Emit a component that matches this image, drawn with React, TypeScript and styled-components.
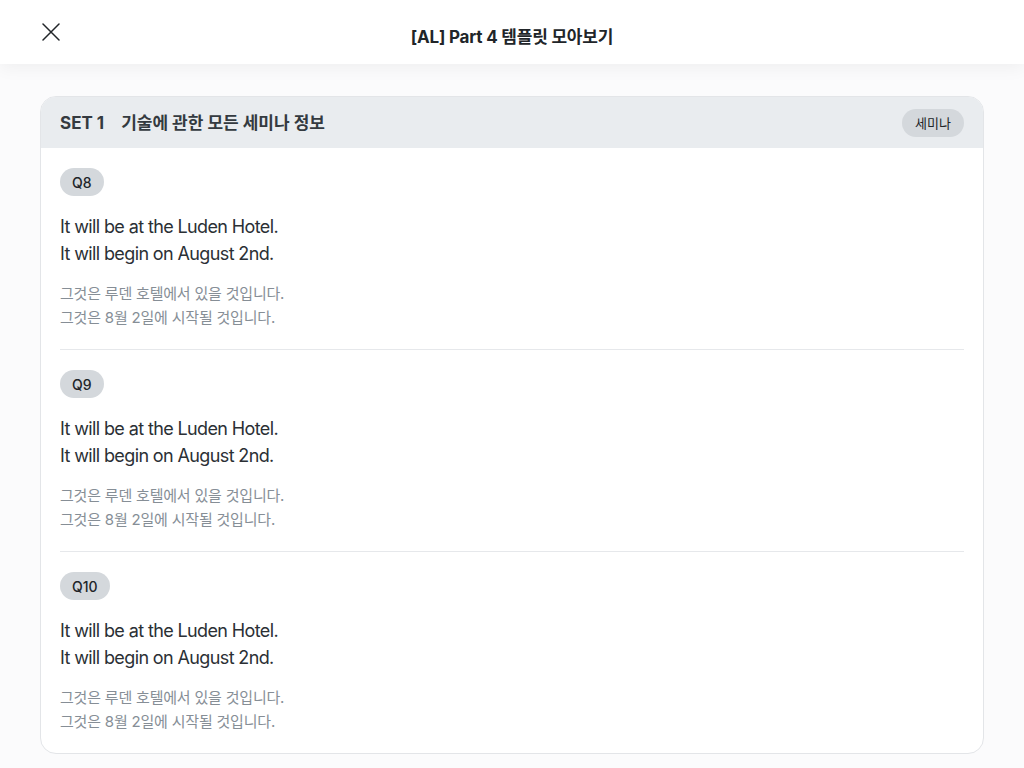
import React from 'react';
import styled, { createGlobalStyle } from 'styled-components';

const GlobalStyle = createGlobalStyle`
  html, body {
    margin: 0;
    padding: 0;
    background: #fbfbfc;
    font-family: 'Inter', 'Noto Sans CJK KR', sans-serif;
    color: #212529;
  }
  * { box-sizing: border-box; }
`;

const Page = styled.div`
  min-height: 768px;
`;

const Header = styled.header`
  position: relative;
  height: 64px;
  background: #fff;
  display: flex;
  align-items: center;
  justify-content: center;
  box-shadow: 0 4px 16px rgba(0, 0, 0, 0.05);
`;

const CloseButton = styled.button`
  position: absolute;
  left: 40px;
  top: 21px;
  width: 22px;
  height: 22px;
  padding: 0;
  border: 0;
  background: none;
  display: flex;
  align-items: center;
  justify-content: center;
`;

const Title = styled.h1`
  margin: 6px 0 0;
  font-size: 17px;
  font-weight: 700;
  letter-spacing: -0.2px;
  color: #212529;
`;

const Main = styled.main`
  padding: 32px 40px 14px;
`;

const Card = styled.section`
  background: #fff;
  border: 1px solid #e3e5e8;
  border-radius: 16px;
  overflow: hidden;
`;

const CardHead = styled.div`
  height: 51px;
  background: #e9ecef;
  display: flex;
  align-items: center;
  justify-content: space-between;
  padding: 0 19px;
`;

const SetTitle = styled.h2`
  margin: 0;
  font-size: 17px;
  font-weight: 700;
  color: #343a40;
  display: flex;
  align-items: baseline;
  gap: 17px;
  line-height: 24px;
`;

const Pill = styled.span<{ small?: boolean }>`
  display: inline-flex;
  align-items: center;
  justify-content: center;
  height: 28px;
  padding: 0 ${(p) => (p.small ? 13 : 12)}px;
  border-radius: 14px;
  background: #d4d8dc;
  font-size: ${(p) => (p.small ? 13 : 14)}px;
  font-weight: ${(p) => (p.small ? 400 : 500)};
  color: #212529;
`;

const List = styled.div`
  padding: 0 19px;
`;

const Item = styled.div`
  padding: 20px 0 19px;
  border-bottom: 1px solid #e6e8eb;
  display: flex;
  flex-direction: column;
  align-items: flex-start;
  &:last-child {
    border-bottom: 0;
  }
`;

const English = styled.p`
  margin: 17px 0 0;
  font-size: 18px;
  line-height: 27px;
  color: #2b3035;
  letter-spacing: -0.62px;
`;

const Korean = styled.p`
  margin: 15px 0 0;
  font-size: 15px;
  line-height: 24px;
  color: #868e96;
  letter-spacing: -0.2px;
`;

const questions = ['Q8', 'Q9', 'Q10'];

export default function App() {
  return (
    <Page>
      <GlobalStyle />
      <Header>
        <CloseButton aria-label="닫기">
          <svg width="18" height="18" viewBox="0 0 18 18">
            <path d="M1 1L17 17M17 1L1 17" stroke="#212529" strokeWidth="1.5" strokeLinecap="round" />
          </svg>
        </CloseButton>
        <Title>[AL] Part 4 템플릿 모아보기</Title>
      </Header>
      <Main>
        <Card>
          <CardHead>
            <SetTitle>
              <span>SET 1</span>
              <span>기술에 관한 모든 세미나 정보</span>
            </SetTitle>
            <Pill small>세미나</Pill>
          </CardHead>
          <List>
            {questions.map((q) => (
              <Item key={q}>
                <Pill>{q}</Pill>
                <English>
                  It will be at the Luden Hotel.
                  <br />
                  It will begin on August 2nd.
                </English>
                <Korean>
                  그것은 루덴 호텔에서 있을 것입니다.
                  <br />
                  그것은 8월 2일에 시작될 것입니다.
                </Korean>
              </Item>
            ))}
          </List>
        </Card>
      </Main>
    </Page>
  );
}
